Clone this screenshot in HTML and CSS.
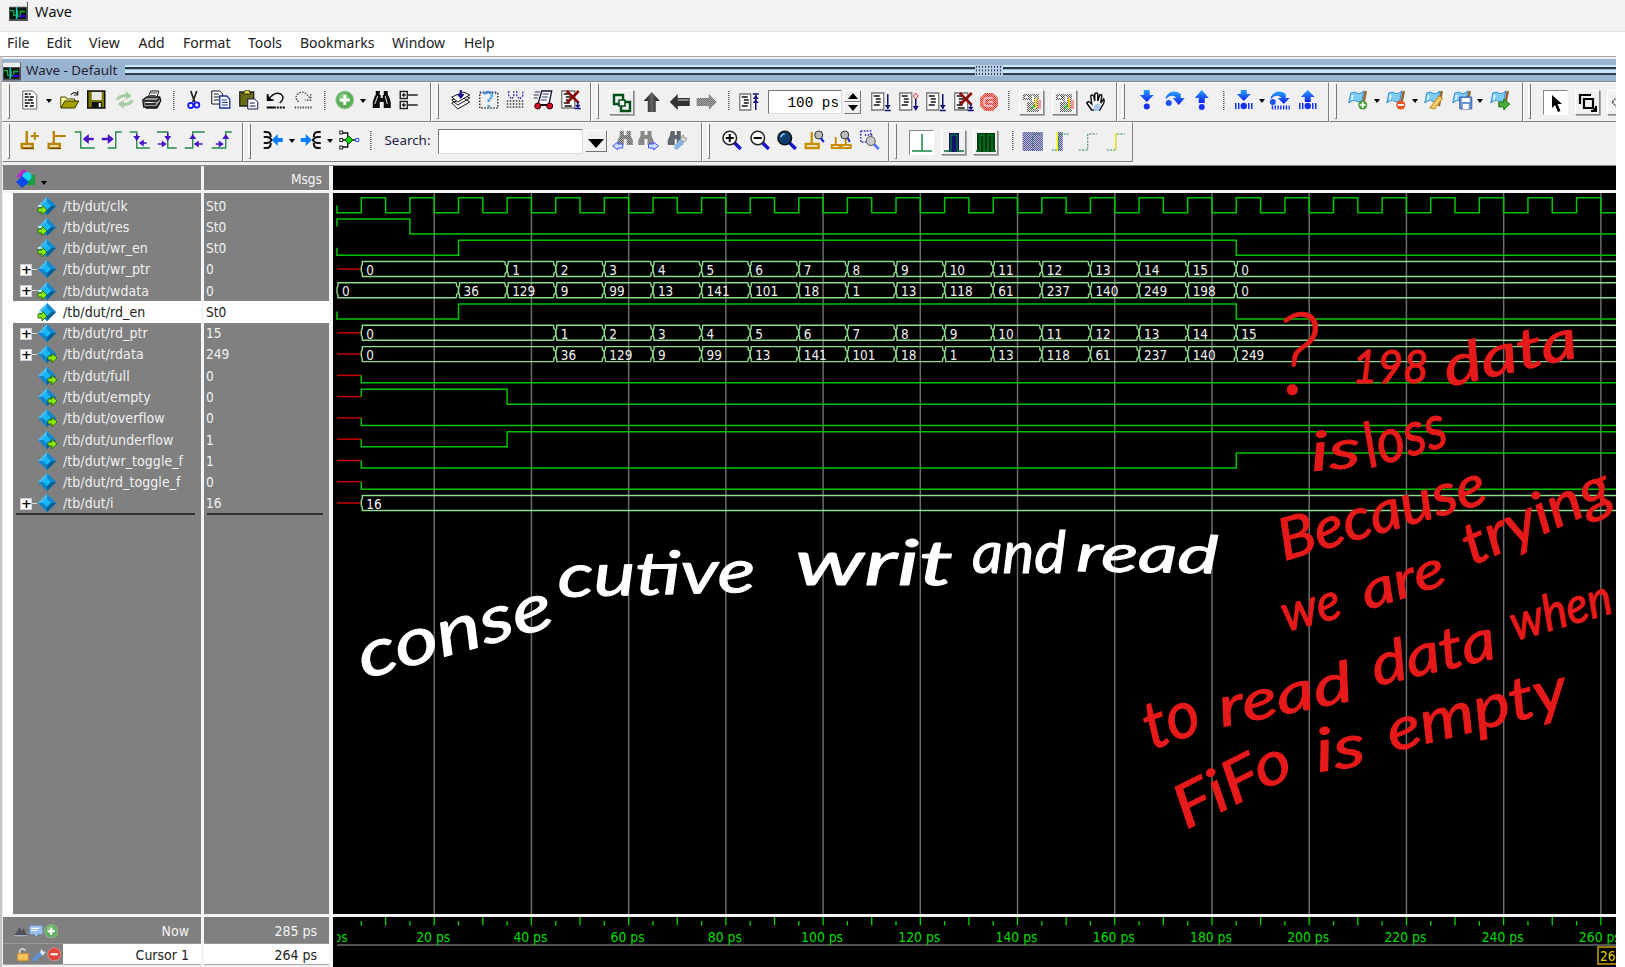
FILE: index.html
```html
<!DOCTYPE html>
<html lang="en">
<head>
<meta charset="utf-8">
<title>Wave</title>
<link rel="stylesheet" href="styles.css">
</head>
<body>
<svg class="defs" aria-hidden="true">
  <defs>
    <pattern id="dither" width="2" height="2" patternUnits="userSpaceOnUse"><path d="M0 0h1v1H0zM1 1h1v1H1z" fill="#efefef"/></pattern>
    <linearGradient id="dia" x1="0" y1="0" x2="1" y2="1"><stop offset="0" stop-color="#8fe0ff"/><stop offset=".45" stop-color="#18a8e8"/><stop offset="1" stop-color="#005a98"/></linearGradient>
    <linearGradient id="dark" x1="0" y1="0" x2="1" y2="0"><stop offset="0" stop-color="#111"/><stop offset=".5" stop-color="#666"/><stop offset="1" stop-color="#111"/></linearGradient>
    <linearGradient id="blu" x1="0" y1="0" x2="0" y2="1"><stop offset="0" stop-color="#27a0ff"/><stop offset="1" stop-color="#1020f0"/></linearGradient>
  </defs>
  <symbol id="app" viewBox="0 0 20 20"><path d="M0 0h20v20H0z" fill="#555"/><path d="M0 0h19v5H0z" fill="#eee"/><path d="M1 6h17v12H1z" fill="#02180c"/><path d="M1 9h4v5h4V9m0 6h3v-5h5" fill="none" stroke="#16b04a" stroke-width="1.4"/><path d="M8 5v13" stroke="#19d0d0" stroke-width="1.6"/><path d="M11 15h7" stroke="#30c" stroke-width="2.4"/></symbol>
  <symbol id="doc" viewBox="0 0 20 20"><path d="M3 1h10l4 4v14H3z" fill="#fff" stroke="#666"/><path d="M5 4h3m1 0h2M5 7h4m1 0h4M5 10h2m1 0h5M5 13h5m1 0h3M5 16h3m2 0h4" stroke="#000" stroke-width="1.4"/></symbol>
  <symbol id="open" viewBox="0 0 20 20"><path d="M1 17V7h5l1 2h8v8z" fill="#ffff9c" stroke="#444400"/><path d="M1 18l4-7h14l-4 7z" fill="#a5a000" stroke="#333300"/><path d="M11 5q3-4 7-1M18 1v4h-4" fill="none" stroke="#222" stroke-width="1.2"/></symbol>
  <symbol id="save" viewBox="0 0 20 20"><path d="M1 1h17v17H1z" fill="#787800" stroke="#111" stroke-width="1.5"/><path d="M5 2h10v8H5z" fill="#e8e8e8"/><path d="M5 12h10v6H5z" fill="#111"/><path d="M12 13h2v4h-2z" fill="#fff"/></symbol>
  <symbol id="reload" viewBox="0 0 20 20"><path d="M1 10q2-6 10-6V1l6 5-6 4V7Q6 7 4 10zM19 10q-2 6-10 6v3l-6-5 6-4v3q5 0 7-3z" fill="#7cba78"/><path d="M0 0h20v20H0z" fill="url(#dither)" opacity=".7"/></symbol>
  <symbol id="print" viewBox="0 0 20 20"><path d="M6 8l3-7h8l-2 7z" fill="#fff" stroke="#111"/><path d="M9 3h6M8 5.500h6" stroke="#111" stroke-width=".8"/><path d="M1 10l4-3h13l1 4-4 6H2z" fill="#999" stroke="#111" stroke-width="1.3"/><path d="M2 11h13l3-3M3 14h11M4 18h11l3-5" fill="none" stroke="#111" stroke-width="1.3"/><path d="M4 12.500h7" stroke="#fff"/></symbol>
  <symbol id="cut" viewBox="0 0 20 20"><path d="M7 1l4 11M13 1L9 12" stroke="#222" stroke-width="1.7"/><circle cx="7" cy="15.500" r="2.600" fill="none" stroke="#11f" stroke-width="1.700"/><circle cx="13" cy="15" r="2.600" fill="none" stroke="#11f" stroke-width="1.700"/></symbol>
  <symbol id="copy" viewBox="0 0 20 20"><path d="M1 1h8l3 3v10H1z" fill="#fff" stroke="#111"/><path d="M3 4h5M3 7h6M3 10h6" stroke="#111"/><path d="M9 6h7l3 3v9H9z" fill="#fff" stroke="#139" stroke-width="1.300"/><path d="M11 10h5M11 12.500h6M11 15h6" stroke="#139"/></symbol>
  <symbol id="paste" viewBox="0 0 20 20"><path d="M1 2h14v14H1z" fill="#6b6b10" stroke="#222" stroke-width="1.300"/><path d="M4 4l3-4h3l2 4z" fill="#dd3" stroke="#222"/><path d="M9 9h7l3 3v7H9z" fill="#fff" stroke="#115"/><path d="M11 13h5M11 16h6" stroke="#115"/></symbol>
  <symbol id="undo" viewBox="0 0 20 20"><path d="M2 4v6h6M3 9q6-8 12-5 5 4-1 9" fill="none" stroke="#111" stroke-width="1.500"/><path d="M1 4l6 7H1z"/><path d="M1 17.500h9" stroke="#000" stroke-width="2"/><path d="M11 17.500h8" stroke="#000" stroke-width="2" stroke-dasharray="2 1"/></symbol>
  <symbol id="redo" viewBox="0 0 20 20"><path d="M17 4v6h-6M16 8Q10-1 4 4q-4 4 1 8" fill="none" stroke="#444" stroke-width="1.300" stroke-dasharray="1.500 1.300"/><path d="M1 17.500h18" stroke="#444" stroke-width="1.800" stroke-dasharray="1.300 1.300"/></symbol>
  <symbol id="plus" viewBox="0 0 20 20"><circle cx="10" cy="10" r="9" fill="#5cae58" stroke="#a4cfa0"/><circle cx="9" cy="8" r="5" fill="#9bd496" opacity=".6"/><path d="M10 5v10M5 10h10" stroke="#fff" stroke-width="2.800"/></symbol>
  <symbol id="bino" viewBox="0 0 20 20"><path d="M4 1h4v4h1v3h2V5h1V1h4v4l1 1 2 6v6h-7v-6H8v6H1v-6l2-6 1-1z" fill="#0c0c0c"/><path d="M6 6l-3 8M13.500 6l2 8" stroke="#fff" stroke-width=".9"/></symbol>
  <symbol id="tree" viewBox="0 0 20 20"><path d="M1.500 1.500h7v7h-7zM1.500 11.500h7v7h-7z" fill="#fff" stroke="#222" stroke-width="1.400"/><path d="M5 3v4M3 5h4M5 13v4M3 15h4M9 5h10M9 15h10" stroke="#222" stroke-width="1.300"/></symbol>
  <symbol id="layers" viewBox="0 0 20 20"><path d="M1 13l6 6 12-7-6-4zM1 10l6 5 12-7-6-3z" fill="#fff" stroke="#111"/><path d="M1 7l6 5 12-7-6-3z" fill="#fff" stroke="#111"/><path d="M10 0v5" stroke="#118" stroke-width="2"/><path d="M6 4h8l-4 5z" fill="#118"/></symbol>
  <symbol id="qbox" viewBox="0 0 20 20"><path d="M1 3h18v15H1z" fill="none" stroke="#333" stroke-width="1.500" stroke-dasharray="1.500 1.500"/><path d="M5 4q5-4 8 0 1 3-3 6v2M10 15v3" fill="none" stroke="#4aa4e8" stroke-width="2.500" stroke-dasharray="2.500 .6"/><path d="M1 2h18" stroke="#22a" stroke-dasharray="1.500 1.500"/></symbol>
  <symbol id="dots" viewBox="0 0 20 20"><path d="M1 11h18M1 14h18M1 17h18" stroke="#333" stroke-width="1.500" stroke-dasharray="1.500 1.500"/><path d="M3 1v5l3 3 2-3V1M11 1v5l3 3 3-3V1" fill="none" stroke="#33b" stroke-width="1.300" stroke-dasharray="2 1.200"/></symbol>
  <symbol id="car" viewBox="0 0 20 20"><path d="M8 1h10l-3 14H4z" fill="#fff" stroke="#113" stroke-width="1.300"/><path d="M1 2h5M0 5h5M0 8h4M9 4h6M8 7h6M7 10h6" stroke="#336" stroke-width="1.200"/><path d="M5 15h11" stroke="#111" stroke-width="2"/><circle cx="4" cy="16" r="3" fill="#d01020" stroke="#300"/><circle cx="16" cy="16" r="3" fill="#d01020" stroke="#300"/></symbol>
  <symbol id="docx" viewBox="0 0 20 20"><path d="M1 1h13v17H1z" fill="#fff" stroke="#777" stroke-width="1.300"/><path d="M3 4h6M5 7h5M5 10h5M3 13h6M4 16h7" stroke="#111" stroke-width="1.600"/><path d="M6 1l12 12M18 1L6 13" stroke="#8b0a0a" stroke-width="2.600"/><path d="M17 12v6M14 18.500h6M15 15l2 2 2-2" fill="none" stroke="#117" stroke-width="1.400"/></symbol>
  <symbol id="docu" viewBox="0 0 20 20"><path d="M1 2h11v16H1z" fill="#fff" stroke="#777" stroke-width="1.300"/><path d="M3 5h6M5 8h5M5 11h5M3 14h6" stroke="#111" stroke-width="1.600"/><path d="M17 3v15M14 2h6" stroke="#117" stroke-width="1.500"/><path d="M14 7h6l-3-4zM14 11h6l-3-4z" fill="#117"/></symbol>
  <symbol id="docd" viewBox="0 0 20 20"><path d="M1 1h12v17H1z" fill="#fff" stroke="#777" stroke-width="1.300"/><path d="M3 4h6M5 7h5M5 10h5M3 13h6" stroke="#111" stroke-width="1.600"/><path d="M17 2v15M14 18.500h6" stroke="#117" stroke-width="1.500"/><path d="M14 13h6l-3 4z" fill="#117"/></symbol>
  <symbol id="docr" viewBox="0 0 20 20"><path d="M1 1h12v17H1z" fill="#fff" stroke="#777" stroke-width="1.300"/><path d="M3 4h6M5 7h5M5 10h5M3 13h6" stroke="#111" stroke-width="1.600"/><path d="M17 7v10" stroke="#117" stroke-width="1.500"/><path d="M14 14h6l-3 5z" fill="#117"/><path d="M17 1l2.500 3L17 7l-2.500-3z" fill="#fff" stroke="#e22"/></symbol>
  <symbol id="stop" viewBox="0 0 20 20"><path d="M6 1h8l5 5v8l-5 5H6l-5-5V6z" fill="#e43a28"/><path d="M14 6H8q-3 0-3 4t3 4h6M9 10h5" fill="none" stroke="#fbd" stroke-width="1.500"/><path d="M0 0h20v20H0z" fill="url(#dither)" opacity=".6"/></symbol>
  <symbol id="link" viewBox="0 0 20 20"><path d="M2 2h9v9H2zM9 9h9v9H9z" fill="none" stroke="#04501a" stroke-width="2.400"/><path d="M7 7h6v6H7z" fill="#efefef" stroke="#04501a" stroke-width="1.600"/></symbol>
  <symbol id="up" viewBox="0 0 20 20"><path d="M10 0l8 9h-4v11H6V9H2z" fill="url(#dark)"/></symbol>
  <symbol id="left" viewBox="0 0 20 20"><path d="M0 10l8-8v4h12v8H8v4z" fill="#333"/><path d="M8 8h11" stroke="#888" stroke-width="2"/></symbol>
  <symbol id="right" viewBox="0 0 20 20"><path d="M20 10l-8-8v4H0v8h12v4z" fill="#555"/><path d="M0 0h20v20H0z" fill="url(#dither)" opacity=".7"/></symbol>
  <symbol id="flagbox" viewBox="0 0 20 20"><path d="M1 1h8v6H1zM5 9h12v10H5z" fill="#555"/><path d="M8 1h9v17H8z" fill="#666"/><path d="M3 3h3v2H3zM10 3h2v6h-2z" fill="#fff"/><path d="M0 0h20v20H0z" fill="url(#dither)"/><path d="M13 5h2v10h-2z" fill="#ec1"/><path d="M16 7h3v9h-3z" fill="#e99"/><path d="M9 12l4 4M13 12l-4 4" stroke="#3d3" stroke-width="1"/></symbol>
  <symbol id="hand" viewBox="0 0 20 20"><path d="M6 18L1 11q1-3 5 1L5 4q1-2 3 0l1 5V2q2-2 3 0v7l2-6q2-1 2 1l-1 7 3-4q1 1 0 4l-4 7z" fill="#fff" stroke="#111" stroke-width="1.500"/><path d="M8 14q4-5 7 0l-2 5H8z" fill="#aac6e8"/></symbol>
  <symbol id="bdown" viewBox="0 0 20 20"><path d="M7 0h6v5h4l-7 7-7-7h4z" fill="url(#blu)"/><circle cx="10" cy="16.500" r="3" fill="#1730f5"/></symbol>
  <symbol id="bup" viewBox="0 0 20 20"><path d="M7 13h6V8h4l-7-8-7 8h4z" fill="url(#blu)"/><circle cx="10" cy="17" r="3" fill="#1730f5"/></symbol>
  <symbol id="barc" viewBox="0 0 20 20"><path d="M1 7Q7-2 16 4v4h4l-6 7-6-7h4Q7 3 1 9z" fill="url(#blu)"/><circle cx="4" cy="13" r="3" fill="#1a50f5"/></symbol>
  <symbol id="sdown" viewBox="0 0 20 20"><path d="M7 0h6v4h4l-7 7-7-7h4z" fill="url(#blu)"/><circle cx="10" cy="16" r="3.200" fill="#1730f5"/><path d="M2 13v6M5 13v6M15 13v6M18 13v6" stroke="#1730f5" stroke-width="1.500"/></symbol>
  <symbol id="sarc" viewBox="0 0 20 20"><path d="M1 7Q7-2 16 4v4h4l-6 6-6-6h4Q7 3 1 9z" fill="url(#blu)"/><circle cx="3" cy="12" r="3" fill="#1a50f5"/><path d="M2 17.500h18" stroke="#1730f5" stroke-width="4" stroke-dasharray="1.400 1.400"/></symbol>
  <symbol id="sup" viewBox="0 0 20 20"><path d="M7 12h6V7h4l-7-7-7 7h4z" fill="url(#blu)"/><circle cx="10" cy="16" r="3.200" fill="#1730f5"/><path d="M2 13v6M5 13v6M15 13v6M18 13v6" stroke="#1730f5" stroke-width="1.500"/></symbol>
  <symbol id="flag" viewBox="0 0 20 20"><path d="M18 1l-3 15" stroke="#946632" stroke-width="2.600"/><path d="M3 3q4-2 6 0t7-2l-2 10q-4 2-6 0t-7 2z" fill="#7ccdf5" stroke="#3a8fd0"/><path d="M5 5l-1 5" stroke="#d6f3ff" stroke-width="2"/></symbol>
  <symbol id="fadd" viewBox="0 0 20 20"><use href="#flag" width="20" height="20"/><circle cx="15" cy="15" r="4.500" fill="#4c9a3c"/><path d="M15 12v6M12 15h6" stroke="#fff" stroke-width="1.600"/></symbol>
  <symbol id="fdel" viewBox="0 0 20 20"><use href="#flag" width="20" height="20"/><circle cx="15" cy="15" r="4.500" fill="#e8521c"/><path d="M12 15h6" stroke="#fff" stroke-width="1.800"/></symbol>
  <symbol id="fedit" viewBox="0 0 20 20"><use href="#flag" width="20" height="20"/><path d="M6 18l9-12 4 2-8 11z" fill="#f5c860" stroke="#b98a30"/></symbol>
  <symbol id="fsave" viewBox="0 0 20 20"><use href="#flag" width="20" height="20"/><path d="M8 7h12v12H8z" fill="#6a94d8" stroke="#3c62a8"/><path d="M10 8h8v4h-8zM11 14h6v5h-6z" fill="#fff"/></symbol>
  <symbol id="fgo" viewBox="0 0 20 20"><use href="#flag" width="20" height="20"/><path d="M9 12h5V9l6 5-6 6v-3H9z" fill="#4da83a" stroke="#2d7a20"/></symbol>
  <symbol id="ptr" viewBox="0 0 20 20"><path d="M6 2v13l3-3 3 7 2.500-1-3-7H16z"/></symbol>
  <symbol id="zbox" viewBox="0 0 20 20"><path d="M2 11V2h11M6 6h9v9H6z" fill="none" stroke="#000" stroke-width="2.200"/><path d="M14 14l4 4M18 13v5h-5" stroke="#000" stroke-width="2" fill="none"/></symbol>
  <symbol id="chev" viewBox="0 0 20 20"><path d="M7 4l-5 5 5 5M12 4L7 9l5 5" fill="none" stroke="#555" stroke-width="1.800" stroke-dasharray="1.500 1"/></symbol>
  <symbol id="cadd" viewBox="0 0 20 20"><path d="M7 1v13M2 14h11v4H2z" fill="none" stroke="#b98500" stroke-width="2.400"/><path d="M11 6h8M15 2v8" stroke="#b98500" stroke-width="2"/><path d="M3 18.500h11" stroke="#604400"/></symbol>
  <symbol id="cdel" viewBox="0 0 20 20"><path d="M7 1v13M2 14h11v4H2z" fill="none" stroke="#b98500" stroke-width="2.400"/><path d="M8 6h11" stroke="#b98500" stroke-width="2"/><path d="M3 18.500h11" stroke="#604400"/></symbol>
  <symbol id="e1" viewBox="0 0 20 20"><path d="M0 2h6v16h14" fill="none" stroke="#25894a" stroke-width="1.400"/><path d="M19 9h-6" stroke="#4a14c8" stroke-width="2.400"/><path d="M8 9l6-5v10z" fill="#4a14c8"/></symbol>
  <symbol id="e2" viewBox="0 0 20 20"><path d="M6 18h8V2h6" fill="none" stroke="#25894a" stroke-width="1.400"/><path d="M0 9h7" stroke="#4a14c8" stroke-width="2.400"/><path d="M12 9L6 4v10z" fill="#4a14c8"/></symbol>
  <symbol id="e3" viewBox="0 0 20 20"><path d="M0 2h7v16h13" fill="none" stroke="#25894a" stroke-width="1.400"/><path d="M7 4v4M17 13h-4" stroke="#4a14c8" stroke-width="1.600"/><path d="M3.500 6h7L7 11zM9 13l5-3.500v7z" fill="#4a14c8"/></symbol>
  <symbol id="e4" viewBox="0 0 20 20"><path d="M0 2h11v16h9" fill="none" stroke="#25894a" stroke-width="1.400"/><path d="M11 3v4M1 14h5" stroke="#4a14c8" stroke-width="1.600"/><path d="M7.500 6h7L11 11zM10 14l-5-3.500v7z" fill="#4a14c8"/></symbol>
  <symbol id="e5" viewBox="0 0 20 20"><path d="M0 18h8V2h12" fill="none" stroke="#25894a" stroke-width="1.400"/><path d="M18 14h-5" stroke="#4a14c8" stroke-width="1.600"/><path d="M4.500 9h7L8 4zM9 14l5-3.500v7z" fill="#4a14c8"/></symbol>
  <symbol id="e6" viewBox="0 0 20 20"><path d="M0 18h14V2h6" fill="none" stroke="#25894a" stroke-width="1.400"/><path d="M4 14h4" stroke="#4a14c8" stroke-width="1.600"/><path d="M10.500 9h7L14 4zM12 14l-5-3.500v7z" fill="#4a14c8"/></symbol>
  <symbol id="m1" viewBox="0 0 20 20"><path d="M1 2h3q4 0 4 5M1 18h3q4 0 4-5M1 7h3q3 0 5 3-2 3-5 3H1" fill="none" stroke="#111" stroke-width="2"/><path d="M9 10l6-6v4h5v4h-5v4z" fill="#0a7cff"/></symbol>
  <symbol id="m2" viewBox="0 0 20 20"><path d="M20 2h-3q-4 0-4 5M20 18h-3q-4 0-4-5M20 7h-3q-3 0-5 3 2 3 5 3h3" fill="none" stroke="#111" stroke-width="2"/><path d="M11 10L5 4v4H0v4h5v4z" fill="#0a7cff"/></symbol>
  <symbol id="m3" viewBox="0 0 20 20"><path d="M3 3h6v5M3 10h4M3 17h6v-5M13 10h5" fill="none" stroke="#111" stroke-width="1.400"/><path d="M1 1h3v3H1zM1 8.500h3v3H1zM1 16h3v3H1z" fill="#fff" stroke="#111"/><path d="M10 6l4 4-4 4-4-4z" fill="#1c1" stroke="#050"/><path d="M17 8.500h3v3h-3z" fill="#fff" stroke="#14f"/></symbol>
  <symbol id="fprev" viewBox="0 0 20 20"><path d="M7 1h4v4h3V1h4v5l2 4v5h-6V9h-3v6H5v-5l2-4z" fill="#444"/><path d="M0 0h20v20H0z" fill="url(#dither)" opacity=".8"/><path d="M0 16l5-4v2h5v4H5v2z" fill="#cdf" stroke="#45f"/></symbol>
  <symbol id="fnext" viewBox="0 0 20 20"><path d="M2 1h4v4h3V1h4v5l2 4v5H9V9H6v6H0v-5l2-4z" fill="#444"/><path d="M0 0h20v20H0z" fill="url(#dither)" opacity=".8"/><path d="M20 16l-5-4v2h-5v4h5v2z" fill="#cdf" stroke="#45f"/></symbol>
  <symbol id="fopt" viewBox="0 0 20 20"><path d="M3 1h4v4h2V1h4v5l2 4v5H9V9H7v6H0v-5l2-4z" fill="#5d6670"/><path d="M9 17l6-7" stroke="#86b4e4" stroke-width="5" stroke-linecap="round"/><path d="M13 9q0-4 3-4v3h3q0 4-4 4z" fill="#ddd" stroke="#999"/></symbol>
  <symbol id="zin" viewBox="0 0 20 20"><path d="M12 12l7 7" stroke="#1414c8" stroke-width="3.400"/><circle cx="8" cy="8" r="6.800" fill="#fff" stroke="#222" stroke-width="1.500"/><path d="M8 4v8M4 8h8" stroke="#000" stroke-width="2"/></symbol>
  <symbol id="zout" viewBox="0 0 20 20"><path d="M12 12l7 7" stroke="#1414c8" stroke-width="3.400"/><circle cx="8" cy="8" r="6.800" fill="#fff" stroke="#222" stroke-width="1.500"/><path d="M4 8h8" stroke="#000" stroke-width="2"/></symbol>
  <symbol id="zfull" viewBox="0 0 20 20"><path d="M12 12l7 7" stroke="#1414c8" stroke-width="3.400"/><circle cx="8" cy="8" r="6.800" fill="#0b3f70" stroke="#111" stroke-width="1.500"/><path d="M4 7q1-3 4-3" stroke="#9cf" fill="none" stroke-width="1.500"/></symbol>
  <symbol id="zcur" viewBox="0 0 20 20"><path d="M7 2v12M1 14h13v4H1z" fill="none" stroke="#c89000" stroke-width="2.300"/><circle cx="14" cy="5" r="4" fill="#bbb" stroke="#333"/><path d="M16 8l3 4" stroke="#22d" stroke-width="2.200"/></symbol>
  <symbol id="zcur2" viewBox="0 0 20 20"><path d="M4 7v8M0 15h8v3H0zM14 7v8M10 15h9v3h-9z" fill="none" stroke="#c89000" stroke-width="2"/><circle cx="13" cy="5" r="4" fill="#bbb" stroke="#333"/><path d="M16 8l2 4" stroke="#22d" stroke-width="2"/></symbol>
  <symbol id="zsel" viewBox="0 0 20 20"><path d="M1 1h10v4M1 1v11h5M5 5h8" fill="none" stroke="#22a" stroke-width="1.500" stroke-dasharray="1.600 1.400"/><path d="M14 14l5 5" stroke="#57e" stroke-width="2.600"/><circle cx="11" cy="11" r="4.500" fill="#ccc" stroke="#555"/></symbol>
  <symbol id="w1" viewBox="0 0 20 20"><path d="M0 18h20M10 1v17" stroke="#188a48" stroke-width="1.500"/></symbol>
  <symbol id="w2" viewBox="0 0 20 20"><path d="M5 0h10v19H5z" fill="#141470"/><path d="M0 18h7V2h6v16h7" fill="none" stroke="#0b6a34" stroke-width="1.500"/></symbol>
  <symbol id="w3" viewBox="0 0 20 20"><path d="M1 0h18v19H1z" fill="#023c0c"/><path d="M0 18h4V2h4v16h4V2h4v16h4" fill="none" stroke="#087228" stroke-width="1.500"/></symbol>
  <symbol id="x1" viewBox="0 0 20 20"><path d="M0 0h20v19H0z" fill="#222280"/><path d="M0 0h20v20H0z" fill="url(#dither)"/><path d="M10 18V2h9" fill="none" stroke="#287a68" stroke-dasharray="2 1"/></symbol>
  <symbol id="x2" viewBox="0 0 20 20"><path d="M7 0h5v19H7z" fill="#222280"/><path d="M0 0h20v20H0z" fill="url(#dither)"/><path d="M6.500 0v19" stroke="#ff0" stroke-width="1.500"/><path d="M1 18h6M8 18V2h10" fill="none" stroke="#25894a" stroke-width="1.200" stroke-dasharray="2 1"/></symbol>
  <symbol id="x3" viewBox="0 0 20 20"><path d="M1 18h9V2h9" fill="none" stroke="#25894a" stroke-width="1" stroke-dasharray="2 1.300"/></symbol>
  <symbol id="x4" viewBox="0 0 20 20"><path d="M1 18h9V2h9" fill="none" stroke="#25894a" stroke-width="1" stroke-dasharray="2 1.300"/><path d="M10 1v17" stroke="#f0e800" stroke-width="1.300"/></symbol>
  <symbol id="net" viewBox="0 0 20 20"><path d="M10 1l9 9-9 9-9-9z" fill="url(#dia)"/><path d="M10 1l9 9h-9z" fill="#1588cc"/><path d="M1 10h9v9z" fill="#1482c4"/><path d="M10 19l9-9h-9z" fill="#006094"/><path d="M10 6l4 4-4 4-4-4z" fill="#12b8fa"/></symbol>
  <symbol id="in" viewBox="0 0 20 20"><use href="#net" width="20" height="20"/><path d="M1 12h4V9l5 5-5 5v-3H1z" fill="#8ae810" stroke="#286a08" stroke-width=".9"/><path d="M1 10h4" stroke="#e8fbff" stroke-width="1.500"/></symbol>
  <symbol id="out" viewBox="0 0 20 20"><use href="#net" width="20" height="20"/><path d="M11 12h4V9l5 5-5 5v-3h-4z" fill="#8ae810" stroke="#286a08" stroke-width=".9"/></symbol>
  <symbol id="objs" viewBox="0 0 20 20"><path d="M11 6h9v10h-9z" fill="#18a040"/><path d="M1 8l7-8 5 3-4 6z" fill="#b528c8"/><circle cx="12" cy="7.500" r="4.500" fill="#18d8f0"/><path d="M7 7l7 6-7 6-6-6z" fill="#0b48e8"/></symbol>
  <symbol id="lock" viewBox="0 0 20 20"><path d="M5 9V5q4-5 8 0" fill="none" stroke="#ddd" stroke-width="2.200"/><path d="M2 9h15v10H2z" fill="#f0b848" stroke="#d09020"/><path d="M3 12h13M3 15h13" stroke="#ffe09a"/></symbol>
  <symbol id="wrench" viewBox="0 0 20 20"><path d="M3 17l9-8" stroke="#5a90e0" stroke-width="5" stroke-linecap="round"/><path d="M11 8l2-6 2 4 4 1-4 5z" fill="#d8e4f4"/></symbol>
  <symbol id="minus" viewBox="0 0 20 20"><circle cx="10" cy="10" r="9" fill="#e0483c" stroke="#f0a098"/><path d="M5 10h10" stroke="#fff" stroke-width="3"/></symbol>
  <symbol id="now1" viewBox="0 0 20 20"><path d="M1 16h18l-4-10-3 4-3-6-3 6z" fill="#4b5258"/><path d="M1 16h18" stroke="#aac" stroke-width="2"/></symbol>
  <symbol id="now2" viewBox="0 0 20 20"><path d="M1 2h18v12h-6l-3 4-3-4H1z" fill="#9cc0ee" stroke="#6a92c8"/><path d="M3 6h11M3 9h8" stroke="#fff" stroke-width="1.600"/></symbol>
</svg>

<header class="titlebar"><svg class="app-icon"><use href="#app"/></svg><span>Wave</span></header>
<nav class="menubar"><span>File</span><span>Edit</span><span>View</span><span>Add</span><span>Format</span><span>Tools</span><span>Bookmarks</span><span>Window</span><span>Help</span></nav>

<main class="window">
  <div class="pane-title"><svg class="pane-icon"><use href="#app"/></svg><span class="pane-name">Wave - Default</span><i class="rails"></i><i class="nub"></i><i class="rails rest"></i></div>

  <div class="toolrow">
    <div class="bar b1"><i class="grip"></i>
      <svg class="ic"><use href="#doc"/></svg><i class="dd wide"></i><svg class="ic"><use href="#open"/></svg><svg class="ic"><use href="#save"/></svg><svg class="ic"><use href="#reload"/></svg><svg class="ic"><use href="#print"/></svg><i class="sep"></i><svg class="ic"><use href="#cut"/></svg><svg class="ic"><use href="#copy"/></svg><svg class="ic"><use href="#paste"/></svg><svg class="ic"><use href="#undo"/></svg><svg class="ic"><use href="#redo"/></svg><i class="sep"></i><svg class="ic"><use href="#plus"/></svg><i class="dd tight"></i><svg class="ic"><use href="#bino"/></svg><svg class="ic"><use href="#tree"/></svg>
    </div>
    <div class="bar b2"><i class="grip"></i>
      <svg class="ic"><use href="#layers"/></svg><svg class="ic"><use href="#qbox"/></svg><svg class="ic"><use href="#dots"/></svg><svg class="ic"><use href="#car"/></svg><svg class="ic"><use href="#docx"/></svg>
    </div>
    <div class="bar b3"><i class="grip"></i>
      <span class="btn"><svg><use href="#link"/></svg></span><svg class="ic low"><use href="#up"/></svg><svg class="ic low"><use href="#left"/></svg><svg class="ic low"><use href="#right"/></svg><i class="sep"></i><svg class="ic low"><use href="#docu"/></svg>
      <span class="runlen">100 ps</span><span class="spin"><i></i><i></i></span>
      <svg class="ic low"><use href="#docd"/></svg><svg class="ic low"><use href="#docr"/></svg><svg class="ic low"><use href="#docd"/></svg><svg class="ic low"><use href="#docx"/></svg><svg class="ic low stop"><use href="#stop"/></svg><i class="sep"></i><span class="btn"><svg><use href="#flagbox"/></svg></span><span class="btn"><svg><use href="#flagbox"/></svg></span><svg class="ic low hand"><use href="#hand"/></svg>
    </div>
    <div class="bar b4"><i class="grip"></i>
      <svg class="ic"><use href="#bdown"/></svg><svg class="ic"><use href="#barc"/></svg><svg class="ic"><use href="#bup"/></svg><i class="sep"></i><svg class="ic"><use href="#sdown"/></svg><i class="dd tight"></i><svg class="ic"><use href="#sarc"/></svg><svg class="ic"><use href="#sup"/></svg>
    </div>
    <div class="bar b5"><i class="grip"></i>
      <svg class="ic"><use href="#fadd"/></svg><i class="dd"></i><svg class="ic"><use href="#fdel"/></svg><i class="dd"></i><svg class="ic"><use href="#fedit"/></svg><svg class="ic"><use href="#fsave"/></svg><i class="dd"></i><svg class="ic"><use href="#fgo"/></svg>
    </div>
    <div class="bar b6"><i class="grip"></i>
      <span class="btn down"><svg><use href="#ptr"/></svg></span><span class="btn"><svg><use href="#zbox"/></svg></span><span class="btn"><svg><use href="#chev"/></svg></span>
    </div>
  </div>

  <div class="toolrow">
    <div class="bar c1"><i class="grip"></i>
      <svg class="ic"><use href="#cadd"/></svg><svg class="ic"><use href="#cdel"/></svg><svg class="ic"><use href="#e1"/></svg><svg class="ic"><use href="#e2"/></svg><svg class="ic"><use href="#e3"/></svg><svg class="ic"><use href="#e4"/></svg><svg class="ic"><use href="#e5"/></svg><svg class="ic"><use href="#e6"/></svg>
    </div>
    <div class="bar c2"><i class="grip"></i>
      <svg class="ic"><use href="#m1"/></svg><i class="dd"></i><svg class="ic"><use href="#m2"/></svg><i class="dd"></i><svg class="ic"><use href="#m3"/></svg><i class="sep"></i><span class="lbl">Search:</span><span class="field"></span><span class="drop"></span><svg class="ic"><use href="#fprev"/></svg><svg class="ic near"><use href="#fnext"/></svg><svg class="ic opt"><use href="#fopt"/></svg>
    </div>
    <div class="bar c3"><i class="grip"></i>
      <svg class="ic"><use href="#zin"/></svg><svg class="ic"><use href="#zout"/></svg><svg class="ic"><use href="#zfull"/></svg><svg class="ic"><use href="#zcur"/></svg><svg class="ic"><use href="#zcur2"/></svg><svg class="ic"><use href="#zsel"/></svg>
    </div>
    <div class="bar c4"><i class="grip"></i>
      <span class="btn down"><svg><use href="#w1"/></svg></span><span class="btn"><svg><use href="#w2"/></svg></span><span class="btn"><svg><use href="#w3"/></svg></span><i class="sep"></i><svg class="ic low"><use href="#x1"/></svg><svg class="ic low"><use href="#x2"/></svg><svg class="ic low"><use href="#x3"/></svg><svg class="ic low"><use href="#x4"/></svg>
    </div>
  </div>

  <section class="wave">
    <div class="col names">
      <div class="head"><svg class="objs"><use href="#objs"/></svg><i class="dd"></i></div>
      <div class="body" id="names"></div>
      <div class="foot"><div class="frow now"><span class="ficons"><svg><use href="#now1"/></svg><svg><use href="#now2"/></svg><svg><use href="#plus"/></svg></span><b>Now</b></div><div class="frow"><span class="ficons"><svg><use href="#lock"/></svg><svg><use href="#wrench"/></svg><svg><use href="#minus"/></svg></span><b>Cursor 1</b></div></div>
    </div>
    <div class="col msgs">
      <div class="head">Msgs</div>
      <div class="body" id="msgs"></div>
      <div class="foot"><div class="frow now"><b>285 ps</b></div><div class="frow"><b>264 ps</b></div></div>
    </div>
    <div class="col plot">
      <div class="head"></div>
      <svg class="signals" id="signals" viewBox="333 192 1283 721"></svg>
      <svg class="timeline" id="timeline" viewBox="333 917 1283 48"></svg>
    </div>
  </section>
</main>

<svg class="ink" viewBox="0 0 1625 967">
  <g class="white" lengthAdjust="spacingAndGlyphs">
    <text transform="translate(364 679) rotate(-15.500)" font-size="66" textLength="200" lengthAdjust="spacingAndGlyphs">conse</text>
    <text transform="translate(558 597) rotate(-1.500)" font-size="60" textLength="198" lengthAdjust="spacingAndGlyphs">cutive</text>
    <text transform="translate(795 585)" font-size="62" textLength="158" lengthAdjust="spacingAndGlyphs">writ</text>
    <text transform="translate(972 573)" font-size="58" textLength="94" lengthAdjust="spacingAndGlyphs">and</text>
    <text transform="translate(1076 571) rotate(1)" font-size="52" textLength="142" lengthAdjust="spacingAndGlyphs">read</text>
  </g>
  <g class="red">
    <text class="thin" transform="translate(1274 394)" font-size="114">?</text>
    <text transform="translate(1352 383)" font-size="46" textLength="76" lengthAdjust="spacingAndGlyphs">198</text>
    <text transform="translate(1448 387) rotate(-13)" font-size="56" textLength="136" lengthAdjust="spacingAndGlyphs">data</text>
    <text transform="translate(1312 471) rotate(-5)" font-size="54" textLength="50" lengthAdjust="spacingAndGlyphs">is</text>
    <text transform="translate(1370 468) rotate(-16)" font-size="62" textLength="84" lengthAdjust="spacingAndGlyphs">loss</text>
    <text transform="translate(1284 561) rotate(-16)" font-size="58" textLength="214" lengthAdjust="spacingAndGlyphs">Because</text>
    <text transform="translate(1286 632) rotate(-15)" font-size="52" textLength="60" lengthAdjust="spacingAndGlyphs">we</text>
    <text transform="translate(1367 610) rotate(-18)" font-size="52" textLength="86" lengthAdjust="spacingAndGlyphs">are</text>
    <text transform="translate(1472 566) rotate(-24)" font-size="58" textLength="158" lengthAdjust="spacingAndGlyphs">trying</text>
    <text transform="translate(1152 750) rotate(-20)" font-size="66" textLength="56" lengthAdjust="spacingAndGlyphs">to</text>
    <text transform="translate(1222 727) rotate(-11.500)" font-size="56" textLength="136" lengthAdjust="spacingAndGlyphs">read</text>
    <text transform="translate(1376 686) rotate(-13)" font-size="58" textLength="126" lengthAdjust="spacingAndGlyphs">data</text>
    <text transform="translate(1515 641) rotate(-16)" font-size="50" textLength="104" lengthAdjust="spacingAndGlyphs">when</text>
    <text transform="translate(1186 830) rotate(-27)" font-size="60" textLength="124" lengthAdjust="spacingAndGlyphs">FiFo</text>
    <text transform="translate(1318 772) rotate(-8)" font-size="60" textLength="50" lengthAdjust="spacingAndGlyphs">is</text>
    <text transform="translate(1392 752) rotate(-14)" font-size="60" textLength="184" lengthAdjust="spacingAndGlyphs">empty</text>
  </g>
</svg>
<script src="wave.js"></script>
</body>
</html>
```
FILE: styles.css
```css
* { box-sizing: border-box; }
body { margin: 0; width: 1625px; height: 967px; overflow: hidden; position: relative; background: #fff; font-family: "DejaVu Sans Condensed", "DejaVu Sans", sans-serif; font-stretch: condensed; font-size: 13px; color: #000; }
i { font-style: normal; }
b { font-weight: normal; }
svg { display: block; flex: none; }
.defs { position: absolute; width: 0; height: 0; }

.titlebar { height: 32px; background: #f3f3f3; border-bottom: 1px solid #e2e2e2; display: flex; align-items: flex-start; padding: 2px 0 0 9px; gap: 7px; font: 14.5px/20px "Open Sans", sans-serif; }
.app-icon { width: 19px; height: 19px; }
.menubar { height: 24px; display: flex; padding-left: 7px; font: 14px/22px "Noto Sans", sans-serif; color: #222; }
.menubar span { white-space: nowrap; }
.menubar span:nth-child(1) { width: 39.500px; }
.menubar span:nth-child(2) { width: 42.500px; }
.menubar span:nth-child(3) { width: 49.500px; }
.menubar span:nth-child(4) { width: 44.500px; }
.menubar span:nth-child(5) { width: 65px; }
.menubar span:nth-child(6) { width: 52px; }
.menubar span:nth-child(7) { width: 92px; }
.menubar span:nth-child(8) { width: 72px; }

.window { width: 1616px; height: 911px; background: #f0f0f0; border-top: 1px solid #a8a8a8; border-left: 2px solid #c4c4c4; display: flex; flex-direction: column; overflow: hidden; }
.pane-title { height: 23px; margin-top: 2px; background: #99b4d1; display: flex; align-items: center; flex: none; border-bottom: 1px solid #888; }
.pane-icon { width: 18px; height: 19px; margin: 2px 5px 0 1px; }
.pane-name { width: 99px; height: 21px; font: 13.4px/20px "Noto Sans", sans-serif; color: #223; white-space: nowrap; }
.rails { width: 850px; height: 10px; background: linear-gradient(#c5e8fa 0 2px, #303c4c 2px 4px, #99b4d1 4px 5px, #c5e8fa 5px 8px, #303c4c 8px 10px); }
.rails.rest { width: auto; flex: 1; }
.nub { width: 28px; height: 11px; background: radial-gradient(circle, #334 0 .8px, transparent 1.1px) 0 0 / 3px 3.6px, #b8d0e8; }

.toolrow { height: 40px; display: flex; flex: none; }
.bar { height: 40px; display: flex; align-items: flex-start; flex: none; border: 1px solid; border-color: #fbfbfb #808080 #808080 #fbfbfb; padding-left: 4px; overflow: hidden; }
.b1 { width: 429px; } .b2 { width: 160px; } .b3 { width: 526px; } .b4 { width: 212px; } .b5 { width: 194px; } .b6 { width: 93px; border-right: 0; }
.c1 { width: 241px; } .c2 { width: 459px; } .c3 { width: 187px; } .c4 { width: 244px; }
.grip { width: 3px; height: 35px; margin: 1px 8px 0 0; flex: none; border-left: 1px solid #fff; border-right: 1px solid #777; border-bottom: 1px solid #888; }
.b1 .grip, .c1 .grip { margin-right: 5.5px; }
.b3 .grip { margin-right: 10px; } .b6 .grip, .c4 .grip { margin-right: 12px; }
.b5 .grip { margin-right: 7px; }
.ic { width: 27.5px; height: 20px; margin-top: 7px; }
.ic.low { margin-top: 9px; }
.ic.near { width: 25px; }
.ic.opt { margin-left: 3px; }
.ic.stop { width: 24px; } .ic.hand { margin-left: 1px; }
.dd { width: 10.5px; height: 40px; flex: none; display: flex; justify-content: center; }
.dd::before { content: ""; align-self: flex-start; margin-top: 16px; border: 3.5px solid transparent; border-top: 4px solid #000; border-bottom: 0; }
.dd.wide { width: 12.5px; } .dd.tight { width: 9px; }
.sep { width: 14px; height: 20px; margin-top: 8px; flex: none; background: repeating-linear-gradient(#555 0 1px, transparent 1px 2px) 7px 0 / 1.5px 20px no-repeat; }
.btn { width: 25px; height: 25px; flex: none; margin: 7px 4px 0 0; padding: 2px; border: 1px solid; border-color: #fff #888 #888 #fff; box-shadow: 1px 1px 0 #aaa; }
.btn svg { width: 20px; height: 20px; }
.b3 .sep ~ .btn { margin: 7px 4px 0; }
.b6 .btn, .c4 .btn { margin-right: 7px; }
.btn.down { background: #fff; border-color: #888 #fff #fff #888; box-shadow: none; }
.runlen { width: 74px; height: 24px; margin: 7px 2px 0 6px; background: #fff; border: 1px solid; border-color: #777 #ddd #ddd #777; text-align: right; font: 14.3px/24px "Liberation Mono", monospace; padding-right: 2px; }
.spin { width: 17px; height: 24px; margin: 7px 6px 0 0; display: flex; flex-direction: column; }
.spin i { height: 12px; border: 1px solid; border-color: #fff #777 #777 #fff; display: flex; justify-content: center; padding-top: 2px; }
.spin i::before { content: ""; height: 0; border: 5px solid transparent; border-bottom: 6px solid #000; border-top: 0; }
.spin i + i::before { border-top: 6px solid #000; border-bottom: 0; }
.lbl { margin: 7px 0 0 8px; width: 53px; font: 13.4px/20px "Noto Sans", sans-serif; color: #224; }
.field { width: 145px; height: 25px; margin: 6px 2px 0 0; background: #fff; border: 1px solid; border-color: #777 #ddd #ddd #777; }
.drop { width: 22px; height: 22px; margin: 7px 2px 0 0; border: 1px solid; border-color: #fff #777 #777 #fff; padding: 8px 0 0 2px; }
.drop::before { content: ""; display: block; width: 0; border: 8.5px solid transparent; border-top: 9px solid #000; border-bottom: 0; }

.wave { display: flex; margin-top: 3px; height: 802px; border-top: 1px solid #888; flex: none; }
.col { display: flex; flex-direction: column; flex: none; }
.names { width: 202px; border-right: 3px solid #f4f4f4; padding-left: 1px; }
.msgs { width: 129px; border-right: 4px solid #f4f4f4; }
.plot { width: 1283px; background: #000; }
.head { height: 27px; background: #808080; color: #f4f4f4; border-bottom: 3px solid #f4f4f4; flex: none; }
.names .head { display: flex; padding: 3px 0 0 12px; }
.names .head .dd { width: 17px; margin-top: -4px; }
.objs { width: 20px; height: 20px; }
.msgs .head { text-align: right; padding: 4px 7px 0 0; line-height: 18px; font-size: 13.6px; }
.plot .head { background: #000; }
.body { height: 724px; background: #808080; border-bottom: 3px solid #f4f4f4; color: #f0f0f0; padding-top: 2px; }
.names .body { border-left: 10px solid #fff; }
.row { height: 21.27px; display: flex; align-items: center; white-space: nowrap; line-height: 20px; }
.row svg { width: 20px; height: 20px; margin-left: 24px; }
.row.bus svg { margin-left: 0; }
.row span { margin-left: 6px; font-size: 14px; letter-spacing: .06px; }
.msgs .row { padding-left: 2px; font-size: 13.6px; }
.row.sel { background: #fff; color: #222; }
.row .box { width: 12px; height: 12px; margin: 1px 0 0 7px; background: #fff; border: 1px solid #ccd; color: #111; font: bold 13px/9px "DejaVu Sans", sans-serif; text-align: center; }
.row .box + i { width: 5px; height: 1px; background: #ddd; }
.insert { height: 2px; margin: -1px 6px 0 3px; background: #333; }
.foot { height: 48px; background: #808080; border-bottom: 1px solid #aaa; }
.frow { height: 20px; display: flex; background: #fff; font-size: 14px; line-height: 23px; color: #222; }
.frow.now { height: 27px; background: #808080; color: #f4f4f4; line-height: 28px; border-bottom: 1px solid #999; }
.frow b { flex: 1; text-align: right; padding-right: 12px; }
.frow .ficons { width: 60px; background: #808080; display: flex; padding: 3px 0 0 13px; gap: 1px; }
.frow.now .ficons { padding: 7px 0 0 10px; }
.ficons svg { width: 14.500px; height: 14.500px; }
.signals { width: 1283px; height: 721px; }
.timeline { width: 1283px; height: 51px; border-top: 3px solid #f4f4f4; }
.sig { fill: none; stroke: #00c400; stroke-width: 1.5; }
.unk { stroke: #c80000; stroke-width: 1.5; }
.busline { fill: none; stroke: #8edc8e; stroke-width: 1.4; }
.grid { stroke: #6c6c6c; stroke-width: 1.5; }
.val { fill: #f2f2f2; font-size: 13.4px; }
.tick { stroke: #00d800; stroke-width: 1.3; }
.tl { fill: #00dc00; font-size: 13.8px; text-anchor: middle; }
.tag { fill: #000; stroke: #c8a000; stroke-width: 1.5; }
.tagtext { fill: #e8d000; font-size: 13.4px; }

.ink { position: absolute; left: 0; top: 0; width: 1625px; height: 967px; pointer-events: none; font-family: Lato, sans-serif; font-style: italic; }
.ink text { stroke-width: 1; stroke-linejoin: round; }
.ink .white { fill: #fff; stroke: #fff; }
.ink .red { fill: #e61a1a; stroke: #e61a1a; }
.ink .thin { font-weight: 300; stroke-width: .5; }
```
FILE: wave.js
```js
const wdata = [36, 129, 9, 99, 13, 141, 101, 18, 1, 13, 118, 61, 237, 140, 249, 198];
const every10 = (start, values) => values.map((v, i) => [start + i * 10, v]);
const count = n => Array.from({ length: n }, (_, i) => i + 1);
const clk = [];
for (let t = 0; t < 265; t += 5) clk.push([t, (t / 5) % 2]);

const signals = [
  { name: 'clk', icon: 'in', msg: 'St0', bits: clk },
  { name: 'res', icon: 'in', msg: 'St0', bits: [[0, 1], [15, 0]] },
  { name: 'wr_en', icon: 'in', msg: 'St0', bits: [[0, 0], [25, 1], [185, 0]] },
  { name: 'wr_ptr', icon: 'net', msg: '0', bus: [[5, 0], ...every10(35, count(15)), [185, 0]] },
  { name: 'wdata', icon: 'in', msg: '0', bus: [[0, 0], ...every10(25, wdata), [185, 0]] },
  { name: 'rd_en', icon: 'in', msg: 'St0', bits: [[0, 0], [25, 1], [185, 0]], sel: true },
  { name: 'rd_ptr', icon: 'net', msg: '15', bus: [[5, 0], ...every10(45, count(15))] },
  { name: 'rdata', icon: 'out', msg: '249', bus: [[5, 0], ...every10(45, wdata.slice(0, 15))] },
  { name: 'full', icon: 'out', msg: '0', bits: [[5, 0]] },
  { name: 'empty', icon: 'out', msg: '0', bits: [[5, 1], [35, 0]] },
  { name: 'overflow', icon: 'out', msg: '0', bits: [[5, 0]] },
  { name: 'underflow', icon: 'out', msg: '1', bits: [[5, 0], [35, 1]] },
  { name: 'wr_toggle_f', icon: 'net', msg: '1', bits: [[5, 0], [185, 1]] },
  { name: 'rd_toggle_f', icon: 'net', msg: '0', bits: [[5, 0]] },
  { name: 'i', icon: 'net', msg: '16', bus: [[5, 16]] }
];

const X = t => 337 + t * 4.861;
const END = 1616;

// Signal names and current values
const row = (s, inner) => `<div class="row${s.bus ? ' bus' : ''}${s.sel ? ' sel' : ''}">${inner}</div>`;
document.getElementById('names').innerHTML = signals.map(s => row(s,
  (s.bus ? '<i class="box">+</i><i></i>' : '') +
  `<svg><use href="#${s.icon}"/></svg><span>/tb/dut/${s.name}</span>`)).join('') + '<div class="insert"></div>';
document.getElementById('msgs').innerHTML = signals.map(s => row(s, s.msg)).join('') + '<div class="insert"></div>';

// Waveforms
let out = '';
for (let t = 20; t <= 260; t += 20) out += `<path class="grid" d="M${X(t)} 192V913"/>`;
signals.forEach((s, n) => {
  const c = 204.2 + n * 21.27, hi = c - 7.5, lo = c + 7.5;
  const list = s.bits || s.bus;
  if (list[0][0] > 0) out += `<path class="unk" d="M337 ${c}H${X(5)}"/>`;
  if (s.bits) {
    let d = `M${X(list[0][0])} ${c}`;
    list.forEach(([t, v], i) => {
      d += `V${v ? hi : lo}H${i + 1 < list.length ? X(list[i + 1][0]) : END}`;
    });
    out += `<path class="sig" d="${d}"/>`;
  } else {
    list.forEach(([t, v], i) => {
      const a = X(t), last = i + 1 === list.length, b = last ? END : X(list[i + 1][0]);
      const right = last ? '' : `M${b - 2} ${hi}V${hi + 3}L${b} ${hi + 5}V${lo - 5}L${b - 2} ${lo - 3}V${lo}`;
      out += `<path class="busline" d="M${b - (last ? 0 : 2)} ${hi}H${a + 1}V${hi + 3}L${a} ${hi + 5}V${lo - 5}L${a + 1} ${lo - 3}V${lo}H${b - (last ? 0 : 2)}${right}"/>`;
      out += `<text class="val" x="${a + 5}" y="${c + 5.8}">${v}</text>`;
    });
  }
});
document.getElementById('signals').innerHTML = out;

// Time ruler
let ruler = '<path class="grid" d="M337 945H1616"/>';
for (let t = 5; t <= 260; t += 5) ruler += `<path class="tick" d="M${X(t)} ${t % 10 ? 921 : 917}V925.500"/>`;
for (let t = 20; t <= 260; t += 20) ruler += `<text class="tl" x="${X(t) - 1}" y="942">${t} ps</text>`;
ruler += '<text class="tl" x="340.500" y="942">ps</text><path d="M333 926h4v19h-4z"/>';
ruler += '<rect class="tag" x="1598" y="947" width="30" height="17"/><text class="tagtext" x="1600" y="961">264</text>';
document.getElementById('timeline').innerHTML = ruler;
```
